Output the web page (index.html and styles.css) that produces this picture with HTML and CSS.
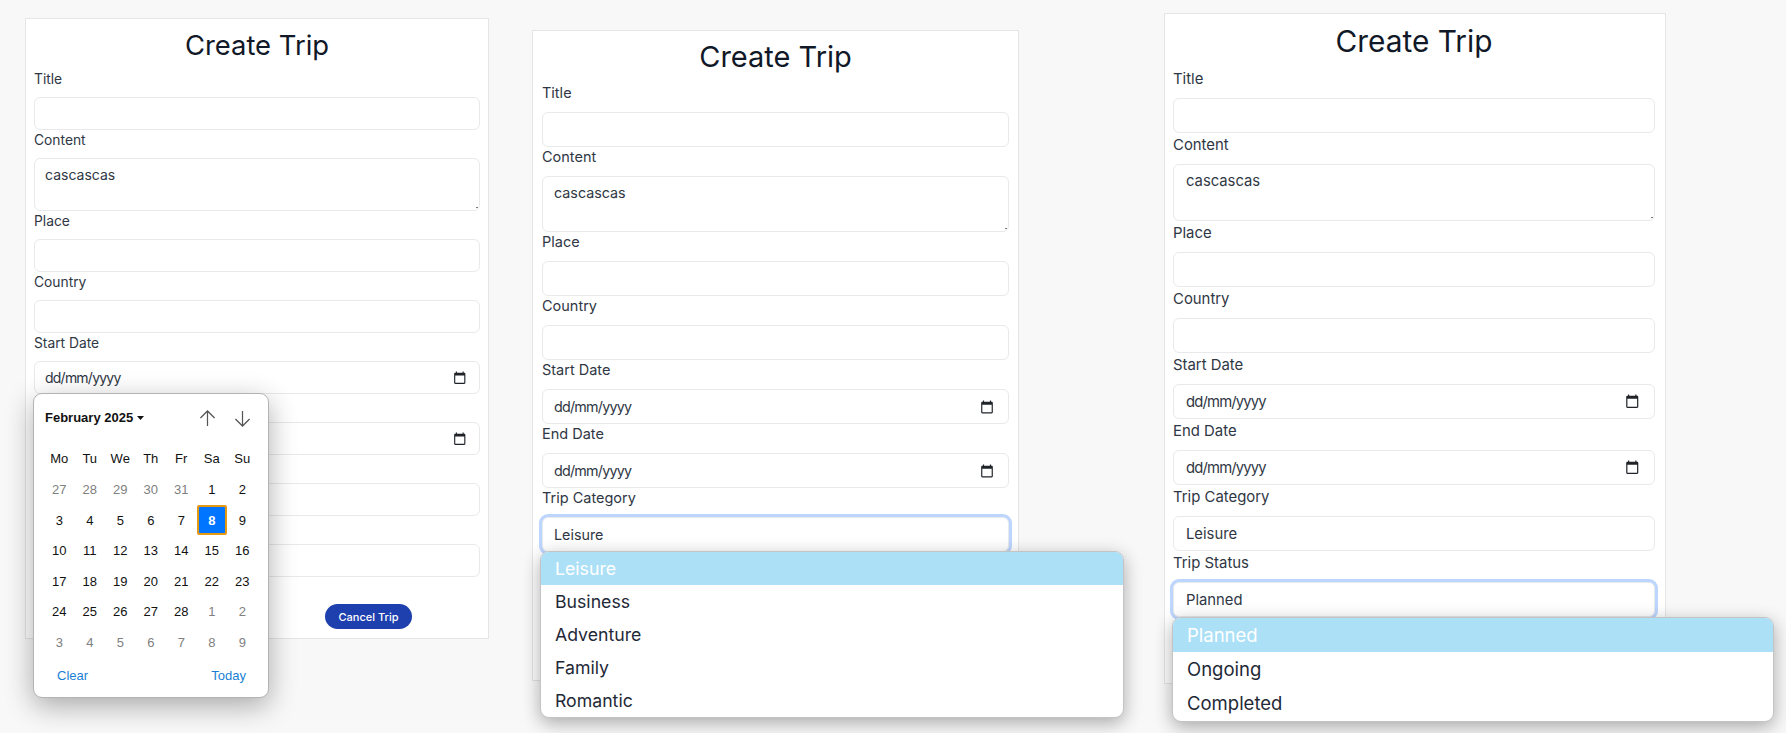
FILE: index.html
```html
<!DOCTYPE html>
<html lang="en">
<head>
<meta charset="utf-8">
<title>Create Trip</title>
<link rel="stylesheet" href="styles.css">
</head>
<body>
<main class="collage">

  <section class="panel panel-a">
    <form class="card">
      <h1 class="card-title">Create Trip</h1>
      <label class="label">Title</label>
      <input class="control" type="text">
      <label class="label">Content</label>
      <textarea class="control area">cascascas</textarea>
      <label class="label">Place</label>
      <input class="control" type="text">
      <label class="label">Country</label>
      <input class="control" type="text">
      <label class="label">Start Date</label>
      <div class="control date anchor">
        <span class="date-text">dd/mm/yyyy</span>
        <svg class="cal-icon" viewBox="0 0 24 24"><path d="M20 3h-1V1h-2v2H7V1H5v2H4c-1.1 0-2 .9-2 2v16c0 1.1.9 2 2 2h16c1.1 0 2-.9 2-2V5c0-1.1-.9-2-2-2zm0 18H4V8h16v13z"/></svg>
        <div class="calendar">
          <div class="cal-head">
            <span class="cal-month">February 2025<svg class="caret" viewBox="0 0 7 4"><path d="M0 0h7L3.500 4z"/></svg></span>
            <span class="cal-arrows">
              <svg class="arrow" viewBox="0 0 18 18"><path d="M9 17V1M1.500 8.500 9 1l7.500 7.500"/></svg>
              <svg class="arrow" viewBox="0 0 18 18"><path d="M9 1v16M1.500 9.500 9 17l7.500-7.500"/></svg>
            </span>
          </div>
          <div class="cal-grid">
            <b>Mo</b><b>Tu</b><b>We</b><b>Th</b><b>Fr</b><b>Sa</b><b>Su</b>
            <i>27</i><i>28</i><i>29</i><i>30</i><i>31</i><span>1</span><span>2</span>
            <span>3</span><span>4</span><span>5</span><span>6</span><span>7</span><span class="selected">8</span><span>9</span>
            <span>10</span><span>11</span><span>12</span><span>13</span><span>14</span><span>15</span><span>16</span>
            <span>17</span><span>18</span><span>19</span><span>20</span><span>21</span><span>22</span><span>23</span>
            <span>24</span><span>25</span><span>26</span><span>27</span><span>28</span><i>1</i><i>2</i>
            <i>3</i><i>4</i><i>5</i><i>6</i><i>7</i><i>8</i><i>9</i>
          </div>
          <div class="cal-foot"><span>Clear</span><span>Today</span></div>
        </div>
      </div>
      <div class="label"></div>
      <div class="control date">
        <svg class="cal-icon" viewBox="0 0 24 24"><path d="M20 3h-1V1h-2v2H7V1H5v2H4c-1.1 0-2 .9-2 2v16c0 1.1.9 2 2 2h16c1.1 0 2-.9 2-2V5c0-1.1-.9-2-2-2zm0 18H4V8h16v13z"/></svg>
      </div>
      <div class="label"></div>
      <div class="control"></div>
      <div class="label"></div>
      <div class="control"></div>
      <div class="actions"><button class="btn" type="button">Cancel Trip</button></div>
    </form>
  </section>

  <section class="panel panel-b">
    <form class="card">
      <h1 class="card-title">Create Trip</h1>
      <label class="label">Title</label>
      <input class="control" type="text">
      <label class="label">Content</label>
      <textarea class="control area">cascascas</textarea>
      <label class="label">Place</label>
      <input class="control" type="text">
      <label class="label">Country</label>
      <input class="control" type="text">
      <label class="label">Start Date</label>
      <div class="control date">
        <span class="date-text">dd/mm/yyyy</span>
        <svg class="cal-icon" viewBox="0 0 24 24"><path d="M20 3h-1V1h-2v2H7V1H5v2H4c-1.1 0-2 .9-2 2v16c0 1.1.9 2 2 2h16c1.1 0 2-.9 2-2V5c0-1.1-.9-2-2-2zm0 18H4V8h16v13z"/></svg>
      </div>
      <label class="label">End Date</label>
      <div class="control date">
        <span class="date-text">dd/mm/yyyy</span>
        <svg class="cal-icon" viewBox="0 0 24 24"><path d="M20 3h-1V1h-2v2H7V1H5v2H4c-1.1 0-2 .9-2 2v16c0 1.1.9 2 2 2h16c1.1 0 2-.9 2-2V5c0-1.1-.9-2-2-2zm0 18H4V8h16v13z"/></svg>
      </div>
      <label class="label">Trip Category</label>
      <div class="control date focused anchor">
        <span>Leisure</span>
        <ul class="menu">
          <li class="menu-item active">Leisure</li>
          <li class="menu-item">Business</li>
          <li class="menu-item">Adventure</li>
          <li class="menu-item">Family</li>
          <li class="menu-item">Romantic</li>
        </ul>
      </div>
    </form>
  </section>

  <section class="panel panel-c">
    <form class="card">
      <h1 class="card-title">Create Trip</h1>
      <label class="label">Title</label>
      <input class="control" type="text">
      <label class="label">Content</label>
      <textarea class="control area">cascascas</textarea>
      <label class="label">Place</label>
      <input class="control" type="text">
      <label class="label">Country</label>
      <input class="control" type="text">
      <label class="label">Start Date</label>
      <div class="control date">
        <span class="date-text">dd/mm/yyyy</span>
        <svg class="cal-icon" viewBox="0 0 24 24"><path d="M20 3h-1V1h-2v2H7V1H5v2H4c-1.1 0-2 .9-2 2v16c0 1.1.9 2 2 2h16c1.1 0 2-.9 2-2V5c0-1.1-.9-2-2-2zm0 18H4V8h16v13z"/></svg>
      </div>
      <label class="label">End Date</label>
      <div class="control date">
        <span class="date-text">dd/mm/yyyy</span>
        <svg class="cal-icon" viewBox="0 0 24 24"><path d="M20 3h-1V1h-2v2H7V1H5v2H4c-1.1 0-2 .9-2 2v16c0 1.1.9 2 2 2h16c1.1 0 2-.9 2-2V5c0-1.1-.9-2-2-2zm0 18H4V8h16v13z"/></svg>
      </div>
      <label class="label">Trip Category</label>
      <div class="control date"><span>Leisure</span></div>
      <label class="label">Trip Status</label>
      <div class="control date focused anchor">
        <span>Planned</span>
        <ul class="menu">
          <li class="menu-item active">Planned</li>
          <li class="menu-item">Ongoing</li>
          <li class="menu-item">Completed</li>
        </ul>
      </div>
    </form>
  </section>

</main>
</body>
</html>
```

FILE: styles.css
```css
* { box-sizing: border-box; }

html, body {
  margin: 0;
  height: 100%;
  background: #f8f8f8;
  overflow: hidden;
}

.collage {
  display: flex;
  height: 733px;
  font-family: "Inter", "Noto Sans", sans-serif;
  color: #2f3744;
}

.panel {
  position: relative;
  flex: none;
  overflow: hidden;
  height: 733px;
  width: var(--w);
  padding: var(--top) 0 0 var(--left);
  background: #f8f8f8;
}

.panel-a {
  --w: 523px; --top: 18px; --left: 25px;
  --card-w: 464px; --card-h: 621px; --pad: 8px; --pad-r: 8px;
  --head-h: 50px; --title-lh: 52px; --title-fs: 27.400px;
  --label-h: 28px; --label-lh: 20px; --label-fs: 13.800px;
  --ctl-h: 33px; --area-h: 53px; --ctl-pad: 10px; --ctl-fs: 14px;
  --icon: 13.500px; --icon-r: 13px;
  --menu-left: -2px; --menu-top: 0px;
  --menu-w: 0px; --item-h: 0px; --item-pad: 0px; --item-fs: 0px;
}

.panel-b {
  --w: 632px; --top: 30px; --left: 9px;
  --card-w: 487px; --card-h: 651px; --pad: 9px; --pad-r: 9px;
  --head-h: 52px; --title-lh: 52px; --title-fs: 29px;
  --label-h: 29px; --label-lh: 20px; --label-fs: 14.500px;
  --ctl-h: 35px; --area-h: 56px; --ctl-pad: 11px; --ctl-fs: 14.300px;
  --icon: 14px; --icon-r: 14px;
  --menu-left: -3px; --menu-top: 0px;
  --menu-w: 584px; --item-h: 33px; --item-pad: 14px; --item-fs: 17.700px;
}

.panel-c {
  --w: 631px; --top: 13px; --left: 8.500px;
  --card-w: 502px; --card-h: 671px; --pad: 8.500px; --pad-r: 9.500px;
  --head-h: 53px; --title-lh: 55px; --title-fs: 29.800px;
  --label-h: 31px; --label-lh: 24px; --label-fs: 14.900px;
  --ctl-h: 35px; --area-h: 57px; --ctl-pad: 12px; --ctl-fs: 14.800px;
  --icon: 14.500px; --icon-r: 15px;
  --menu-left: -2px; --menu-top: 1px;
  --menu-w: 602px; --item-h: 34.200px; --item-pad: 14px; --item-fs: 18.500px;
}

.card {
  display: flex;
  flex-direction: column;
  width: var(--card-w);
  height: var(--card-h);
  padding: 0 var(--pad-r) 0 var(--pad);
  background: #fff;
  border: 1px solid #e5e5e5;
}

.card-title {
  margin: 0;
  flex: none;
  height: var(--head-h);
  font-size: var(--title-fs);
  font-weight: 400;
  line-height: var(--title-lh);
  text-align: center;
  color: #111827;
}

.label {
  display: block;
  flex: none;
  height: var(--label-h);
  font-size: var(--label-fs);
  line-height: var(--label-lh);
}

.control {
  display: block;
  flex: none;
  width: 100%;
  height: var(--ctl-h);
  margin: 0;
  padding: 0 var(--ctl-pad);
  font: inherit;
  font-size: var(--ctl-fs);
  color: #2f3744;
  background: #fff;
  border: 1px solid #e7e9ec;
  border-radius: 6px;
  outline: none;
}

.area {
  height: var(--area-h);
  padding-top: 7px;
  line-height: 18px;
  resize: none;
  background: linear-gradient(#777, #777) no-repeat right 1px bottom 2px / 2px 1px, #fff;
}

.date {
  display: flex;
  align-items: center;
  justify-content: space-between;
}

.date-text { letter-spacing: -0.055em; }

.anchor { position: relative; }

.cal-icon {
  flex: none;
  width: var(--icon);
  height: var(--icon);
  margin-left: auto;
  margin-right: calc(var(--icon-r) - var(--ctl-pad));
  fill: #1f2328;
}

.focused {
  border-color: #e7e9ec;
  box-shadow: 0 0 0 3px #bdd6ff;
}

.actions {
  display: flex;
  justify-content: flex-end;
  padding: 27px 68px 0 0;
}

.btn {
  width: 87px;
  height: 25px;
  padding: 0;
  font-family: inherit;
  font-size: 11px;
  font-weight: 500;
  color: #fff;
  background: #1e40af;
  border: 0;
  border-radius: 13px;
}

.menu {
  position: absolute;
  top: calc(100% + var(--menu-top));
  left: var(--menu-left);
  z-index: 2;
  width: var(--menu-w);
  margin: 0;
  padding: 0;
  list-style: none;
  overflow: hidden;
  background: #fff;
  border: 1px solid #c4c4c4;
  border-radius: 9px;
  box-shadow: 0 5px 18px rgba(0, 0, 0, 0.32);
}

.menu-item {
  height: var(--item-h);
  padding-left: var(--item-pad);
  font-size: var(--item-fs);
  line-height: var(--item-h);
  color: #1f2937;
}

.menu-item.active {
  color: #fff;
  background: #ace0f7;
}

.calendar {
  position: absolute;
  top: 100%;
  left: -2px;
  z-index: 2;
  width: 236px;
  height: 305px;
  padding: 0 10px;
  font-family: "Liberation Sans", Arial, sans-serif;
  font-size: 13px;
  color: #111;
  background: #fff;
  border: 1px solid #b3b3b3;
  border-radius: 9px;
  box-shadow: 0 8px 28px rgba(0, 0, 0, 0.32);
}

.cal-head {
  display: flex;
  align-items: center;
  justify-content: space-between;
  height: 49px;
  padding: 0 7px 2px 1px;
}

.cal-month {
  display: flex;
  align-items: center;
  font-weight: 700;
}

.caret {
  width: 7px;
  height: 4px;
  margin-left: 4px;
  fill: #111;
}

.cal-arrows {
  display: flex;
  gap: 18px;
  padding-top: 2px;
}

.arrow {
  display: block;
  width: 17px;
  height: 17px;
  fill: none;
  stroke: #555;
  stroke-width: 1.300;
}

.cal-grid {
  display: grid;
  grid-template-columns: repeat(7, 30.500px);
  grid-template-rows: 31.500px;
  grid-auto-rows: 30.500px;
  justify-items: center;
  align-items: center;
}

.cal-grid b { font-weight: 400; color: #111; }
.cal-grid i { font-style: normal; color: #808080; }

.cal-grid .selected {
  display: flex;
  align-items: center;
  justify-content: center;
  width: 30px;
  height: 30px;
  font-weight: 700;
  color: #fff;
  background: #0075ff;
  border: 2px solid #e69a14;
  border-radius: 2px;
}

.cal-foot {
  display: flex;
  justify-content: space-between;
  height: 37px;
  padding: 10px 12px 0 13px;
  font-size: 13px;
  color: #1a7fd4;
}
```
